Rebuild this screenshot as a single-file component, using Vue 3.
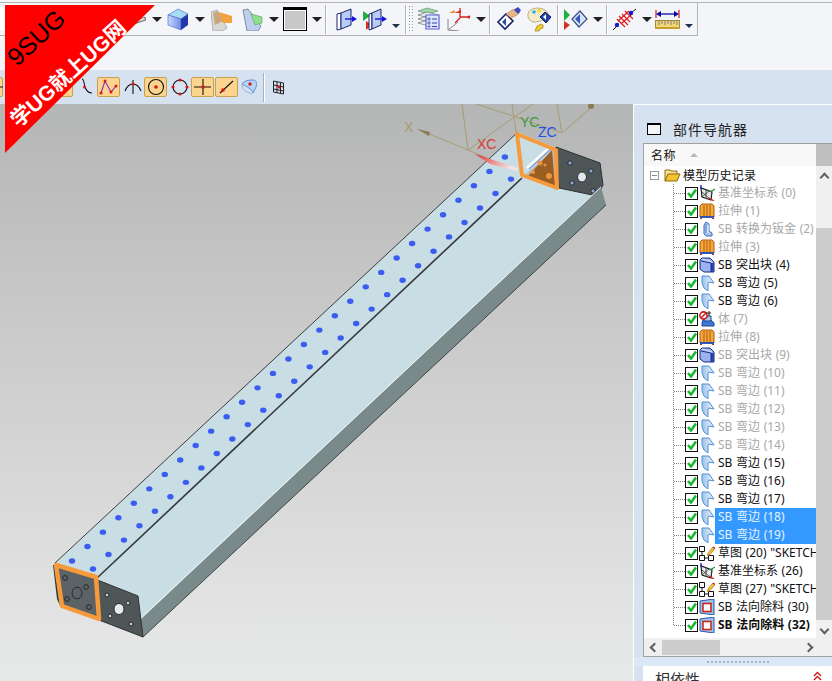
<script setup>
const dotsA = Array.from({ length: 29 }, (_, i) => ({ x: 72 + i * 15.46, y: 561 - i * 14.43 }))
const dotsB = Array.from({ length: 28 }, (_, i) => ({ x: 93 + i * 15.48, y: 569 - i * 14.44 }))

const rows = [
  { label: '基准坐标系 (0)', icon: 'csys', dim: true },
  { label: '拉伸 (1)', icon: 'extrude', dim: true },
  { label: 'SB 转换为钣金 (2)', icon: 'convert', dim: true },
  { label: '拉伸 (3)', icon: 'extrude', dim: true },
  { label: 'SB 突出块 (4)', icon: 'block' },
  { label: 'SB 弯边 (5)', icon: 'flange' },
  { label: 'SB 弯边 (6)', icon: 'flange' },
  { label: '体 (7)', icon: 'body', dim: true },
  { label: '拉伸 (8)', icon: 'extrude', dim: true },
  { label: 'SB 突出块 (9)', icon: 'block', dim: true },
  { label: 'SB 弯边 (10)', icon: 'flange', dim: true },
  { label: 'SB 弯边 (11)', icon: 'flange', dim: true },
  { label: 'SB 弯边 (12)', icon: 'flange', dim: true },
  { label: 'SB 弯边 (13)', icon: 'flange', dim: true },
  { label: 'SB 弯边 (14)', icon: 'flange', dim: true },
  { label: 'SB 弯边 (15)', icon: 'flange' },
  { label: 'SB 弯边 (16)', icon: 'flange' },
  { label: 'SB 弯边 (17)', icon: 'flange' },
  { label: 'SB 弯边 (18)', icon: 'flange', selected: true },
  { label: 'SB 弯边 (19)', icon: 'flange', selected: true },
  { label: '草图 (20) "SKETCH_000"', icon: 'sketch' },
  { label: '基准坐标系 (26)', icon: 'csys' },
  { label: '草图 (27) "SKETCH_001"', icon: 'sketch' },
  { label: 'SB 法向除料 (30)', icon: 'cut' },
  { label: 'SB 法向除料 (32)', icon: 'cut', bold: true }
]
</script>

<template>
  <div class="app">
    <svg class="defs" width="0" height="0">
      <symbol id="csys" viewBox="0 0 16 16">
        <path d="M2 3l1 9 9 3 1-8z" fill="#e8e8e8" stroke="#222" stroke-width="1.200" />
        <path d="M3 12l7-6M3 7l8 7M7 4v9" stroke="#333" fill="none" stroke-width=".8" />
        <path d="M2 0v4" stroke="#22c" stroke-width="1.400" />
        <path d="M11 7l5-3" stroke="#1a9a3a" stroke-width="1.400" />
        <path d="M10 13l5 3" stroke="#d22" stroke-width="1.400" />
      </symbol>
      <symbol id="extrude" viewBox="0 0 16 16">
        <path d="M1 3l2-2h10l2 2v11H1z" fill="#f4a838" stroke="#b05a10" />
        <path d="M5 2v12M8 2v12M11 2v12" stroke="#b05a10" />
        <path d="M1 14h14" stroke="#2050c0" stroke-width="1.800" />
        <path d="M2 15v1M14 15v1" stroke="#c03020" stroke-width="2" />
      </symbol>
      <symbol id="convert" viewBox="0 0 16 16">
        <path d="M7 1l3 2v7l3 2v3H7l-2-2V4z" fill="#a9c4ee" stroke="#3f6fc0" />
        <path d="M9 4v8" stroke="#fff" />
        <path d="M7 3v9" stroke="#5a86cc" />
      </symbol>
      <symbol id="block" viewBox="0 0 16 16">
        <path d="M1 3l2-2h8l4 4v10H5L1 12z" fill="#9ab2f0" stroke="#1c2c80" />
        <path d="M3 2l10 3" stroke="#dbe6fb" />
        <path d="M12 6h3v9h-3z" fill="#2c44b0" />
        <path d="M2 4l10 2v9" fill="none" stroke="#1c2c80" />
      </symbol>
      <symbol id="flange" viewBox="0 0 16 16">
        <defs>
          <linearGradient id="fl" x1="0" y1="0" x2="1" y2="0">
            <stop offset="0" stop-color="#9cc2ec" />
            <stop offset="1" stop-color="#f0f6fd" />
          </linearGradient>
        </defs>
        <path d="M3 1h7l5 7-5-1-1 1v8l-4-3L3 8z" fill="url(#fl)" stroke="#4d8fd6" />
      </symbol>
      <symbol id="body" viewBox="0 0 16 16">
        <path d="M4 9h8l3 3v3H3v-3z" fill="#3f78d0" stroke="#1d4590" />
        <path d="M5 5h7v5H5z" fill="#a9c8ee" stroke="#1d4590" />
        <circle cx="4.500" cy="4.500" r="3.600" fill="#fff" stroke="#d01818" stroke-width="1.600" />
        <path d="M2 7l5-5" stroke="#d01818" stroke-width="1.400" />
        <path d="M7 2h5M10 0v5" stroke="#222" />
      </symbol>
      <symbol id="sketch" viewBox="0 0 16 16">
        <path d="M.5 1.500h5v5h-5zM.5 10.500h5v5h-5zM9.500 10.500h5v5h-5z" fill="#fff" stroke="#111" />
        <path d="M3 7v3M6 13h3" stroke="#111" />
        <path d="M9 8l5-6 2 1.500-5 6-2.500 1z" fill="#f4c23a" stroke="#a06a10" stroke-width=".7" />
        <path d="M14 2l2 1.500" stroke="#d02020" stroke-width="1.400" />
      </symbol>
      <symbol id="cut" viewBox="0 0 16 16">
        <path d="M1 2l14-2v16L1 14z" fill="#9cc0ea" stroke="#2a5aa8" />
        <path d="M4 4.500h8v8H4z" fill="#fff" stroke="#d02010" stroke-width="1.500" />
      </symbol>
    </svg>

    <header class="tb1">
      <div class="field"></div>
      <svg class="ml2" width="16" height="16" viewBox="0 0 16 16"><path d="M0 13l15-7 1 3-15 5z" fill="#b8b8b8" stroke="#555" stroke-width=".7" /><path d="M6 10.500l8-3" stroke="#fff" /></svg>
      <i class="drop ml6"></i>
      <svg class="ml5" width="22" height="23" viewBox="0 0 22 23">
        <defs>
          <linearGradient id="cf" x1="0" x2="1"><stop offset="0" stop-color="#c8d6fb" /><stop offset="1" stop-color="#6f8ee8" /></linearGradient>
        </defs>
        <path d="M1 7l10-6 10 5-7 5z" fill="#a6dcf4" stroke="#4660c8" stroke-width=".6" />
        <path d="M1 7l13 4v11L1 17z" fill="url(#cf)" stroke="#4660c8" stroke-width=".6" />
        <path d="M14 11l7-5v11l-7 5z" fill="#2238a8" />
      </svg>
      <i class="drop ml6"></i>
      <svg class="ml6" width="21" height="23" viewBox="0 0 21 23">
        <path d="M0 4l6-2 10 18-5 3H2z" fill="#d8d8d4" stroke="#999" stroke-width=".7" />
        <path d="M2 5l5-2 5 10-8 4z" fill="#c8a67e" />
        <path d="M8 4l13 4v7l-9 0z" fill="#f3a240" />
      </svg>
      <svg class="ml10" width="21" height="23" viewBox="0 0 21 23">
        <path d="M1 2l5-1 13 17-3 5H5z" fill="#bcd0ee" stroke="#6f7a8a" stroke-width=".8" />
        <path d="M9 6l11 3v6l-7 2z" fill="#8ee08c" stroke="#5e9a5e" stroke-width=".6" />
      </svg>
      <i class="drop ml6"></i>
      <div class="swatch ml4"></div>
      <i class="drop ml5"></i>
      <span class="sep ml3"></span>
      <svg class="ml10" width="21" height="23" viewBox="0 0 21 23">
        <path d="M1 6l4-1v16l-4 1z" fill="#fff" stroke="#1a2570" />
        <path d="M5 5l10-4v16L5 21z" fill="#b8ccf4" stroke="#1a2570" />
        <path d="M9 11h8" stroke="#1414e0" stroke-width="1.400" />
        <path d="M16 8l5 3-5 3z" fill="#1414e0" />
      </svg>
      <svg class="ml6" width="24" height="23" viewBox="0 0 24 23">
        <path d="M0 3l7 5-7 5z" fill="#1eb040" />
        <path d="M3 13l6 4-6 5z" fill="#d83020" />
        <path d="M6 6l3-1v16l-3 1z" fill="#fff" stroke="#1a2570" />
        <path d="M9 5l9-4v16l-9 4z" fill="#b8ccf4" stroke="#1a2570" />
        <path d="M12 11h8" stroke="#1414e0" stroke-width="1.400" />
        <path d="M19 8l5 3-5 3z" fill="#1414e0" />
      </svg>
      <i class="drop-s ml5"></i>
      <span class="sep ml5"></span>
      <span class="grip ml2"></span>
      <svg class="ml4" width="22" height="24" viewBox="0 0 22 24">
        <path d="M0 4l9-3 11 3-9 3z" fill="#9fd8a8" stroke="#5a8a6a" stroke-width=".6" />
        <path d="M0 8l9-3 11 3-9 3zM0 12l9-3 11 3-9 3zM0 16l9-3 11 3-9 3z" fill="#e8f0e8" stroke="#606060" stroke-width=".6" />
        <path d="M8 8h13v14H8z" fill="#dfe6fb" stroke="#5a62d8" stroke-width="1.200" />
        <path d="M10 11h2v2h-2zM10 15h2v2h-2zM10 19h2v1h-2z" fill="none" stroke="#3040a0" stroke-width=".7" />
        <path d="M14 12h5M14 16h5M14 19.500h5" stroke="#3040a0" />
      </svg>
      <svg class="ml7" width="23" height="24" viewBox="0 0 23 24">
        <path d="M1 12v11M1 23l10-8M1 23l11 1" stroke="#888" fill="none" />
        <path d="M2 6l6-3-1 3z" fill="#f08020" />
        <path d="M7 6l7-3 0 3z" fill="#e04020" />
        <path d="M13 1v10M13 11l-5 5M13 10h8" stroke="#d82020" stroke-width="1.300" fill="none" />
        <circle cx="22" cy="10" r="1.500" fill="#d82020" />
      </svg>
      <i class="drop ml6"></i>
      <span class="sep ml3"></span>
      <svg class="ml7" width="24" height="24" viewBox="0 0 24 24">
        <path d="M1 15l8-8 7 7-8 8z" fill="#fff" stroke="#1a2570" stroke-width="1.600" />
        <path d="M5 15l4-4v8z" fill="#2848b0" />
        <path d="M9 7l6-4 6-2 2 4-3 3-6 3z" fill="#e8b888" stroke="#a87850" stroke-width=".6" />
        <path d="M17 3l4-3 3 3-3 4z" fill="#3848c8" />
      </svg>
      <svg class="ml6" width="25" height="25" viewBox="0 0 25 25">
        <path d="M1 7c1-6 10-7 15-5s6 6 4 8l-6 4-5 1C5 16 0 12 1 7z" fill="#f4ecc8" stroke="#a89060" stroke-width=".7" />
        <circle cx="7" cy="5" r="1.800" fill="#28b0f0" />
        <circle cx="12" cy="3.500" r="1.800" fill="#f8d820" />
        <path d="M13 10l5-5 6 5-5 6z" fill="#2040a8" stroke="#101850" />
        <path d="M16 10l3-3v6z" fill="#fff" />
        <path d="M8 24l2-5 4-2 2 1 0 3-3 1-1 2z" fill="#f4cc30" stroke="#a08010" stroke-width=".7" />
      </svg>
      <span class="sep ml5"></span>
      <svg class="ml5" width="25" height="22" viewBox="0 0 25 22">
        <path d="M1 1l6 6-6 6z" fill="#1eb040" />
        <path d="M1 13l6 4-6 5z" fill="#d83020" />
        <path d="M9 11l8-8 7 8-8 8z" fill="#d8e4fa" stroke="#405080" stroke-width="1.200" />
        <path d="M12 11l5-5v10z" fill="#3858c0" />
      </svg>
      <i class="drop ml5"></i>
      <span class="sep ml3"></span>
      <svg class="ml5" width="25" height="25" viewBox="0 0 25 25">
        <path d="M7 9l9 9M10 7l8 8M13 4l8 8M5 12l8 8" stroke="#e01818" stroke-width="1.100" />
        <path d="M6 14l11-10M9 17l11-10" stroke="#e01818" stroke-width="1.100" />
        <path d="M1 23l5-5M19 6l5-4" stroke="#111" stroke-width="1" />
        <circle cx="5" cy="18" r="2.200" fill="#1818d0" />
        <circle cx="19" cy="6" r="2.200" fill="#1818d0" />
      </svg>
      <i class="drop ml5"></i>
      <svg class="ml3" width="25" height="22" viewBox="0 0 25 22">
        <path d="M1 2v8M24 2v8" stroke="#d81818" stroke-width="1.200" />
        <path d="M3 6h19" stroke="#0808a0" stroke-width="1.300" />
        <path d="M1 6l5-3v6zM24 6l-5-3v6z" fill="#0808a0" />
        <rect x="0.500" y="12.500" width="24" height="8" fill="#f0d878" stroke="#a08838" />
        <path d="M4 13v4M7 13v3M10 13v4M13 13v3M16 13v4M19 13v3M22 13v4" stroke="#807878" />
        <path d="M0 20h25" stroke="#c8a030" stroke-width="2" />
      </svg>
      <i class="drop-s ml5"></i>
    </header>

    <div class="gap-band"></div>

    <div class="tb2">
      <button class="hot first"><svg width="23" height="20" viewBox="0 0 23 20"><path d="M14 10h9" stroke="#111" /></svg></button>
      <button class="hot ml47"></button>
      <svg class="ml8" width="12" height="18" viewBox="0 0 12 18"><path d="M1 1c2 0 2 5 3 8s3 6 7 6" fill="none" stroke="#111" stroke-width="1.100" /><circle cx="3.500" cy="9" r="1.500" fill="#d81818" /></svg>
      <button class="hot ml4">
        <svg width="23" height="20" viewBox="0 0 23 20"><path d="M4 16L8 4l6 11 5-6" fill="none" stroke="#8828c0" stroke-width="1.100" /><g fill="#d81818"><circle cx="4" cy="16" r="1.500" /><circle cx="8" cy="4" r="1.500" /><circle cx="14" cy="15" r="1.500" /><circle cx="19" cy="9" r="1.500" /></g></svg>
      </button>
      <svg class="ml4" width="18" height="18" viewBox="0 0 18 18"><path d="M1 13c2-5 5-7 8-7s6 2 8 7M9 2v14" fill="none" stroke="#111" stroke-width="1.100" /><circle cx="9" cy="6" r="1.500" fill="#d81818" /></svg>
      <button class="hot ml2">
        <svg width="23" height="20" viewBox="0 0 23 20"><circle cx="12" cy="10" r="7.500" fill="none" stroke="#111" stroke-width="1.100" /><circle cx="12" cy="10" r="1.800" fill="#d81818" /></svg>
      </button>
      <svg class="ml4" width="18" height="18" viewBox="0 0 18 18"><circle cx="9" cy="9" r="7" fill="none" stroke="#111" stroke-width="1.100" /><g fill="#d81818"><circle cx="9" cy="2" r="1.600" /><circle cx="9" cy="16" r="1.600" /><circle cx="2" cy="9" r="1.600" /><circle cx="16" cy="9" r="1.600" /></g></svg>
      <button class="hot ml2">
        <svg width="23" height="20" viewBox="0 0 23 20"><path d="M3 10h17M12 2v16" stroke="#111" stroke-width="1.100" /><circle cx="12" cy="10" r="1.700" fill="#d81818" /></svg>
      </button>
      <button class="hot ml1">
        <svg width="23" height="20" viewBox="0 0 23 20"><path d="M5 16L18 4" stroke="#111" stroke-width="1.100" /><circle cx="8" cy="13" r="1.800" fill="#d81818" /></svg>
      </button>
      <svg class="ml3" width="16" height="16" viewBox="0 0 16 16"><path d="M1 5c2-3 6-4 10-4s4 1 5 5l-4 8C10 9 6 8 1 5z" fill="#b8d4f4" stroke="#5a90d0" /><path d="M1 5c0 3 1 5 3 7l7 3" fill="none" stroke="#9ab8d8" /><circle cx="9" cy="5" r="1.700" fill="#d81818" /></svg>
      <span class="sep2"></span>
      <svg class="ml9" width="11" height="15" viewBox="0 0 11 15"><path d="M.5 1l10 2v11l-10-2zM.5 5l10 2M.5 9l10 2M4 2v11M7.500 2.500v11" fill="none" stroke="#222" /><circle cx="6" cy="7" r="1.500" fill="#d81818" /></svg>
    </div>

    <main class="main">
      <section class="view">
        <svg class="model" width="633" height="577" viewBox="0 104 633 577">
          <defs>
            <linearGradient id="xa" x1="0" x2="1" y1="0" y2="0.350">
              <stop offset="0" stop-color="#d81818" />
              <stop offset="0.350" stop-color="#e87070" />
              <stop offset="1" stop-color="#f4e4e4" />
            </linearGradient>
          </defs>

          <!-- wcs box -->
          <g stroke="#a89c72" fill="none">
            <path d="M420 130L468 150L516 170" />
            <path d="M462 104l6 46M476 104l40 13 46 16M533 104l-65 46M557 104l5 29M593 106l-31 27M512 104l4 28" />
          </g>
          <path d="M417 129l13 3-1 4z" fill="#8a7c50" />
          <circle cx="591" cy="106" r="3" fill="#8a7c50" />
          <text x="404" y="132" class="axis" fill="#a89c72">X</text>

          <!-- beam -->
          <polygon points="56,563 518,132 556,148 522,177 96,578" fill="#c9dde4" />
          <polygon points="96,578 522,177 558,186 601,187 140,620 138,596" fill="#c9dde4" />
          <path d="M55 563L518 132" stroke="#3a3f42" stroke-width="1" />
          <path d="M96 579L522 178" stroke="#33383a" stroke-width="1.600" />

          <g fill="#3a5cf0">
            <ellipse v-for="(d, i) in dotsA" :key="'a' + i" :cx="d.x" :cy="d.y" rx="3.200" ry="2.700" />
            <ellipse v-for="(d, i) in dotsB" :key="'b' + i" :cx="d.x" :cy="d.y" rx="3.200" ry="2.700" />
          </g>

          <!-- far end plate -->
          <polygon points="556,147 600,163 603,185 597,196 559,188" fill="#4f5658" stroke="#2c3032" />
          <ellipse cx="582" cy="177" rx="4.500" ry="5" fill="#dfe8ee" stroke="#2c3032" />
          <g fill="#8ea8d8" stroke="#22262a">
            <circle cx="570" cy="163" r="2.200" />
            <circle cx="591" cy="171" r="2.200" />
            <circle cx="572" cy="183" r="2.200" />
            <circle cx="593" cy="191" r="2.200" />
          </g>
          <polygon points="140,620 601,187 606,205 143,637" fill="#7a8a8b" />
          <path d="M141 618L601 187" stroke="#eef4f4" stroke-width="1" />
          <path d="M143 637L606 205" stroke="#3c4446" stroke-width="1" />

          <polygon points="528,176 552,150 555,186" fill="#9a5e22" />
          <path d="M527 168l23-21" stroke="#fff" stroke-width="2.400" />
          <path d="M529 169l22-20" stroke="#7c98d8" stroke-width="1.200" />
          <g fill="#ea9440">
            <circle cx="549" cy="176" r="3" />
            <circle cx="540" cy="163" r="2.500" />
            <circle cx="545" cy="165" r="1.500" />
            <circle cx="533" cy="172" r="2" />
          </g>
          <polygon points="517,134 556,150 557,188 522,175" fill="none" stroke="#f79a3c" stroke-width="4" stroke-linejoin="round" />

          <!-- near end plates -->
          <polygon points="95,579 138,596 143,637 99,620" fill="#4f5658" stroke="#2c3032" />
          <ellipse cx="119" cy="609" rx="5" ry="5.500" fill="#e4ecef" stroke="#2c3032" />
          <g fill="#c8cdd0" stroke="#222">
            <circle cx="107" cy="595" r="2" />
            <circle cx="128" cy="603" r="2" />
            <circle cx="110" cy="616" r="2" />
            <circle cx="131" cy="624" r="2" />
          </g>
          <path d="M54 565l4 34 4 8" fill="none" stroke="#34393b" stroke-width="2" />
          <polygon points="56,565 96,577 99,619 62,606" fill="#5c6366" stroke="#f79a3c" stroke-width="4.500" stroke-linejoin="round" />
          <g fill="none" stroke="#24282a">
            <circle cx="65" cy="578" r="2.400" />
            <circle cx="86" cy="587" r="2.400" />
            <circle cx="67" cy="599" r="2.400" />
            <circle cx="89" cy="607" r="2.400" />
            <ellipse cx="77" cy="593" rx="5" ry="5.800" />
          </g>

          <!-- axes -->
          <polygon points="475,154 518,168 517,171 490,164" fill="url(#xa)" />
          <text x="477" y="149" class="axis" fill="#d83838">XC</text>
          <text x="520" y="127" class="axis" fill="#3f9a40">YC</text>
          <text x="538" y="137" class="axis" fill="#2050e8">ZC</text>
        </svg>
      </section>

      <aside class="panel">
        <div class="panel-title">
          <span class="winbox"></span>
          <span>部件导航器</span>
        </div>
        <div class="nav">
          <div class="nav-body">
            <div class="tree-col">
              <div class="head">
                <span>名称</span>
                <i class="sort"></i>
              </div>
              <div class="tree">
                <div class="root">
                  <span class="minus"></span>
                  <svg width="17" height="14" viewBox="0 0 17 14">
                    <path d="M1 13V2h5l1 1h6v3" fill="#f8e090" stroke="#8a6a10" />
                    <path d="M1 13l3-7h12l-3 7z" fill="#f4c430" stroke="#8a6a10" />
                  </svg>
                  <span class="root-label">模型历史记录</span>
                </div>
                <div class="rows">
                  <div v-for="row in rows" :key="row.label" class="row">
                    <span class="dash"></span>
                    <span class="check">
                      <svg width="10" height="10" viewBox="0 0 10 10"><path d="M1 5l3 3.500L9 1.500" fill="none" stroke="#18b830" stroke-width="2.600" /></svg>
                    </span>
                    <svg class="ticon" width="16" height="16"><use :href="'#' + row.icon" /></svg>
                    <span class="label" :class="{ dim: row.dim, sel: row.selected, bold: row.bold }">{{ row.label }}</span>
                  </div>
                </div>
              </div>
            </div>
            <div class="vscroll">
              <div class="corner"></div>
              <div class="track-top"><i class="chev up"></i></div>
              <div class="vthumb"></div>
              <div class="track-bot"><i class="chev down"></i></div>
            </div>
          </div>
          <div class="hscroll">
            <i class="chev left"></i>
            <div class="hthumb"></div>
            <i class="chev right"></i>
          </div>
        </div>
        <div class="sash"><span v-for="n in 16" :key="n"></span></div>
        <div class="deps">
          <span>相依性</span>
          <svg width="9" height="10" viewBox="0 0 9 10"><path d="M1 5l3.500-3.500L8 5M1 9l3.500-3.500L8 9" fill="none" stroke="#d01010" stroke-width="1.300" /></svg>
        </div>
      </aside>
    </main>

    <svg class="banner" width="160" height="160" viewBox="0 0 160 160">
      <polygon points="5,5 155,5 5,153" fill="#ff0000" />
      <text x="42" y="44" transform="rotate(-43 42 44)" class="b1">9SUG</text>
      <text x="73" y="79" transform="rotate(-42 73 79)" class="b2">学UG就上UG网</text>
    </svg>
  </div>
</template>

<style scoped>
.app {
  position: relative;
  width: 832px;
  height: 681px;
  overflow: hidden;
  display: flex;
  flex-direction: column;
  background: #f4f5f8;
  font-family: "Noto Sans", "Noto Sans CJK SC", sans-serif;
}

.defs {
  position: absolute;
}

.tb1 {
  display: flex;
  align-items: center;
  box-sizing: border-box;
  width: 698px;
  height: 34px;
  margin-top: 2px;
  flex: none;
  border-top: 1px solid #b4b4b4;
  border-bottom: 1px solid #b4b4b4;
  border-right: 1px solid #b4b4b4;
  position: relative;
}

.tb1::before {
  content: "";
  position: absolute;
  left: 697px;
  top: -1px;
  width: 135px;
  height: 1px;
  background: #b4b4b4;
}

.field {
  width: 128px;
  height: 24px;
  background: #fff;
  flex: none;
}

.tb1 svg,
.tb2 svg {
  flex: none;
  display: block;
}

.ml1 { margin-left: 1px; }
.ml2 { margin-left: 2px; }
.ml3 { margin-left: 3px; }
.ml4 { margin-left: 4px; }
.ml5 { margin-left: 5px; }
.ml6 { margin-left: 6px; }
.ml7 { margin-left: 7px; }
.ml8 { margin-left: 8px; }
.ml9 { margin-left: 9px; }
.ml10 { margin-left: 10px; }
.ml47 { margin-left: 47px; }

.drop {
  flex: none;
  width: 0;
  height: 0;
  border-left: 5px solid transparent;
  border-right: 5px solid transparent;
  border-top: 5px solid #222;
}

.drop-s {
  flex: none;
  width: 0;
  height: 0;
  margin-top: 14px;
  border-left: 4px solid transparent;
  border-right: 4px solid transparent;
  border-top: 4px solid #223050;
}

.swatch {
  flex: none;
  box-sizing: border-box;
  width: 24px;
  height: 24px;
  background: #c8c8c8;
  border: 1px solid #000;
  border-top-width: 3px;
  box-shadow: inset 0 0 0 1px #fff;
}

.sep {
  flex: none;
  width: 1px;
  height: 29px;
  background: #b4b4b4;
  box-shadow: 1px 0 0 #fff;
}

.grip {
  flex: none;
  width: 6px;
  height: 28px;
  background-image: radial-gradient(#9a9a9a 0.8px, transparent 1px);
  background-size: 3px 3px;
}

.gap-band {
  height: 34px;
  flex: none;
}

.tb2 {
  flex: none;
  height: 34px;
  display: flex;
  align-items: center;
  background: #d7e2f1;
}

.hot {
  flex: none;
  box-sizing: border-box;
  width: 23px;
  height: 20px;
  padding: 0;
  border: 1px solid #c8a050;
  border-radius: 2px;
  background: #fcd48e;
}

.hot svg {
  margin: -1px;
}

.first {
  margin-left: -20px;
}

.sep2 {
  flex: none;
  width: 1px;
  height: 29px;
  margin-left: 6px;
  background: #a8b0bc;
  box-shadow: 1px 0 0 #fff;
}

.main {
  flex: 1;
  min-height: 0;
  display: flex;
}

.view {
  flex: none;
  width: 633px;
  background: linear-gradient(#b4b5b5, #c8c8c8 35%, #e8e9e9 100%);
}

.model {
  display: block;
}

.axis {
  font-family: "Liberation Sans", sans-serif;
  font-size: 14px;
}

.panel {
  flex: 1;
  min-width: 0;
  display: flex;
  flex-direction: column;
  box-sizing: border-box;
  background: #d7e2f1;
  border-top: 1px solid #fff;
  border-left: 1px solid #fff;
}

.panel-title {
  height: 38px;
  flex: none;
  display: flex;
  align-items: center;
  box-sizing: border-box;
  padding: 10px 0 0 13px;
  gap: 12px;
  font-size: 14px;
  letter-spacing: 1px;
  color: #222;
}

.winbox {
  flex: none;
  box-sizing: border-box;
  width: 14px;
  height: 12px;
  border: 1px solid #000;
  border-top-width: 2px;
  background: #f4f5f8;
}

.nav {
  flex: none;
  height: 514px;
  margin-left: 9px;
  box-sizing: border-box;
  border: 1px solid #a0a0a0;
  border-right: 0;
  background: #fff;
  display: flex;
  flex-direction: column;
}

.nav-body {
  flex: 1;
  min-height: 0;
  display: flex;
}

.tree-col {
  width: 172px;
  flex: none;
  overflow: hidden;
}

.head {
  height: 22px;
  display: flex;
  align-items: center;
  padding-left: 7px;
  background: #f8f8f8;
  font-size: 12px;
  color: #111;
  letter-spacing: 0.500px;
}

.sort {
  width: 0;
  height: 0;
  margin-left: 14px;
  border-left: 4px solid transparent;
  border-right: 4px solid transparent;
  border-bottom: 4px solid #b8b8b8;
}

.tree {
  position: relative;
  font-size: 12px;
}

.root {
  height: 18px;
  display: flex;
  align-items: center;
  padding-left: 6px;
}

.minus {
  flex: none;
  box-sizing: border-box;
  width: 9px;
  height: 9px;
  margin-right: 5px;
  border: 1px solid #9a9a9a;
  background: linear-gradient(#888, #888) center / 5px 1px no-repeat #fff;
}

.root-label {
  margin-left: 2px;
  color: #111;
  letter-spacing: 0.200px;
}

.rows {
  position: relative;
  margin-left: 29px;
}

.rows::before {
  content: "";
  position: absolute;
  left: 0;
  top: 0;
  bottom: 9px;
  border-left: 1px dotted #808080;
}

.row {
  height: 18px;
  display: flex;
  align-items: center;
  white-space: nowrap;
  padding-left: 1px;
}

.dash {
  flex: none;
  width: 11px;
  border-top: 1px dotted #808080;
}

.check {
  flex: none;
  box-sizing: border-box;
  width: 13px;
  height: 13px;
  display: flex;
  align-items: center;
  justify-content: center;
  background: #fff;
  border: 1px solid #111;
}

.ticon {
  flex: none;
  margin-left: 1px;
  position: relative;
  z-index: 1;
}

.label {
  margin-left: 0;
  padding-left: 3px;
  color: #111;
  height: 18px;
  line-height: 18px;
  flex: 1;
  word-spacing: 0.500px;
}

.label.dim {
  color: #a8a8a8;
}

.label.sel {
  background: #3399ff;
  color: #e8f2ff;
}

.label.bold {
  font-weight: 700;
}

.vscroll {
  flex: none;
  width: 16px;
  display: flex;
  flex-direction: column;
  background: #f0f0f0;
}

.corner {
  height: 22px;
  background: #c0c0c0;
}

.track-top {
  height: 62px;
  display: flex;
  justify-content: center;
  padding-top: 8px;
  box-sizing: border-box;
}

.vthumb {
  height: 392px;
  background: #cdcdcd;
}

.track-bot {
  flex: 1;
  display: flex;
  justify-content: center;
  align-items: center;
}

.chev {
  display: block;
  width: 5px;
  height: 5px;
  flex: none;
  border-top: 2px solid #606060;
  border-left: 2px solid #606060;
}

.chev.up { transform: rotate(45deg); }
.chev.down { transform: rotate(225deg); }
.chev.left { transform: rotate(-45deg); margin-left: 7px; }
.chev.right { transform: rotate(135deg); margin-left: 85px; }

.hscroll {
  flex: none;
  height: 18px;
  display: flex;
  align-items: center;
  background: #f0f0f0;
}

.hthumb {
  width: 58px;
  height: 15px;
  margin-left: 4px;
  background: #cdcdcd;
}

.sash {
  flex: none;
  height: 9px;
  display: flex;
  align-items: center;
  justify-content: center;
  gap: 2px;
  padding-left: 10px;
  background: #dde8f7;
}

.sash span {
  width: 2px;
  height: 2px;
  background: #a8b4c4;
}

.deps {
  flex: 1;
  margin-left: 9px;
  display: flex;
  justify-content: space-between;
  align-items: flex-start;
  padding: 2px 10px 0 12px;
  background: #fff;
  font-size: 15px;
  color: #333;
}

.deps svg {
  margin-top: 3px;
}

.banner {
  position: absolute;
  left: 0;
  top: 0;
}

.b1 {
  font-family: "Liberation Sans", sans-serif;
  font-size: 25px;
  fill: #000;
  text-anchor: middle;
}

.b2 {
  font-family: "Liberation Sans", "Noto Sans CJK SC", sans-serif;
  font-size: 21px;
  font-weight: 700;
  fill: #fff;
  text-anchor: middle;
}
</style>
